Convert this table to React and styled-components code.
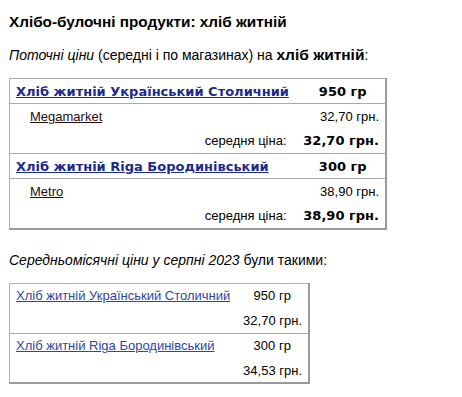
import React from 'react'
import styled, { createGlobalStyle } from 'styled-components'

const GlobalStyle = createGlobalStyle`
    body {
        margin: 0;
        background: #fff;
        font-family: "Liberation Sans", Arial, sans-serif;
        color: #000;
    }
`

const current = [
    {
        name: 'Хліб житній Український Столичний',
        weight: '950 гр',
        stores: [{ name: 'Megamarket', price: '32,70 грн.' }],
        avg: '32,70 грн.',
    },
    {
        name: 'Хліб житній Riga Бородинівський',
        weight: '300 гр',
        stores: [{ name: 'Metro', price: '38,90 грн.' }],
        avg: '38,90 грн.',
    },
]

const monthly = [
    { name: 'Хліб житній Український Столичний', weight: '950 гр', price: '32,70 грн.' },
    { name: 'Хліб житній Riga Бородинівський', weight: '300 гр', price: '34,53 грн.' },
]

function App() {
  return (
    <Page>
        <GlobalStyle />
        <Title>Хлібо-булочні продукти: хліб житній</Title>
        <Intro>
            <em>Поточні ціни</em> (середні і по магазинах) на <b>хліб житній</b>:
        </Intro>
        <PriceTable width={378}>
            <colgroup>
                <col style={{ width: 291 }} />
                <col />
            </colgroup>
            <tbody>
                {current.map((p) => (
                    <React.Fragment key={p.name}>
                        <HeadRow>
                            <ProductCell><ProductLink href="#">{p.name}</ProductLink></ProductCell>
                            <WeightCell>{p.weight}</WeightCell>
                        </HeadRow>
                        {p.stores.map((s) => (
                            <tr key={s.name}>
                                <StoreCell><StoreLink href="#">{s.name}</StoreLink></StoreCell>
                                <PriceCell>{s.price}</PriceCell>
                            </tr>
                        ))}
                        <tr>
                            <AvgLabel>середня ціна:</AvgLabel>
                            <AvgPrice>{p.avg}</AvgPrice>
                        </tr>
                    </React.Fragment>
                ))}
            </tbody>
        </PriceTable>
        <Subtitle>
            <em>Середньомісячні ціни у серпні 2023</em> були такими:
        </Subtitle>
        <PriceTable width={301}>
            <colgroup>
                <col style={{ width: 227 }} />
                <col />
            </colgroup>
            <tbody>
                {monthly.map((p, i) => (
                    <React.Fragment key={p.name}>
                        <MonthRow $divider={i > 0}>
                            <MonthCell><MonthLink href="#">{p.name}</MonthLink></MonthCell>
                            <MonthWeight>{p.weight}</MonthWeight>
                        </MonthRow>
                        <tr>
                            <MonthCell />
                            <PriceCell>{p.price}</PriceCell>
                        </tr>
                    </React.Fragment>
                ))}
            </tbody>
        </PriceTable>
    </Page>
  )
}

export default App


const Page = styled.div`
    padding: 0 9px;
`
const Title = styled.h2`
    margin: 13px 0 0;
    font-size: 15.3px;
    line-height: 18px;
    font-weight: bold;
`
const Intro = styled.p`
    margin: 15px 0 0;
    font-size: 14px;
    line-height: 18px;
    white-space: nowrap;
    em { font-style: italic; }
    b { font-weight: bold; font-size: 15.5px; }
`
const Subtitle = styled(Intro)`
    margin-top: 21px;
`
const PriceTable = styled.table`
    margin-top: 14px;
    width: ${(p) => p.width}px;
    table-layout: fixed;
    border-collapse: collapse;
    border-top: 1px solid #b4b4b4;
    border-left: 1px solid #b4b4b4;
    border-right: 2px solid #9a9a9a;
    border-bottom: 2px solid #9a9a9a;
    font-size: 13px;
    td {
        height: 25px;
        padding: 0 6px;
        vertical-align: middle;
        white-space: nowrap;
        box-sizing: border-box;
    }
`
const HeadRow = styled.tr`
    border-top: 1px solid #aaa;
    border-bottom: 1px solid #aaa;
    font-family: "DejaVu Sans", Verdana, sans-serif;
    font-weight: bold;
    font-size: 13px;
`
const ProductCell = styled.td``
const ProductLink = styled.a`
    color: #1c2a8c;
`
const WeightCell = styled.td`
    text-align: center;
`
const StoreCell = styled.td`
    && { padding-left: 20px; }
`
const StoreLink = styled.a`
    color: #2a0c0c;
`
const PriceCell = styled.td`
    text-align: right;
`
const AvgLabel = styled.td`
    text-align: right;
    && { padding-right: 14px; }
`
const AvgPrice = styled.td`
    text-align: right;
    font-family: "DejaVu Sans", Verdana, sans-serif;
    font-weight: bold;
    font-size: 13px;
    && { padding: 0 6px 0 0; }
`
const MonthRow = styled.tr`
    border-top: ${(p) => (p.$divider ? '1px solid #aaa' : 'none')};
`
const MonthCell = styled.td``
const MonthLink = styled.a`
    color: #2b47a6;
`
const MonthWeight = styled.td`
    text-align: center;
`
